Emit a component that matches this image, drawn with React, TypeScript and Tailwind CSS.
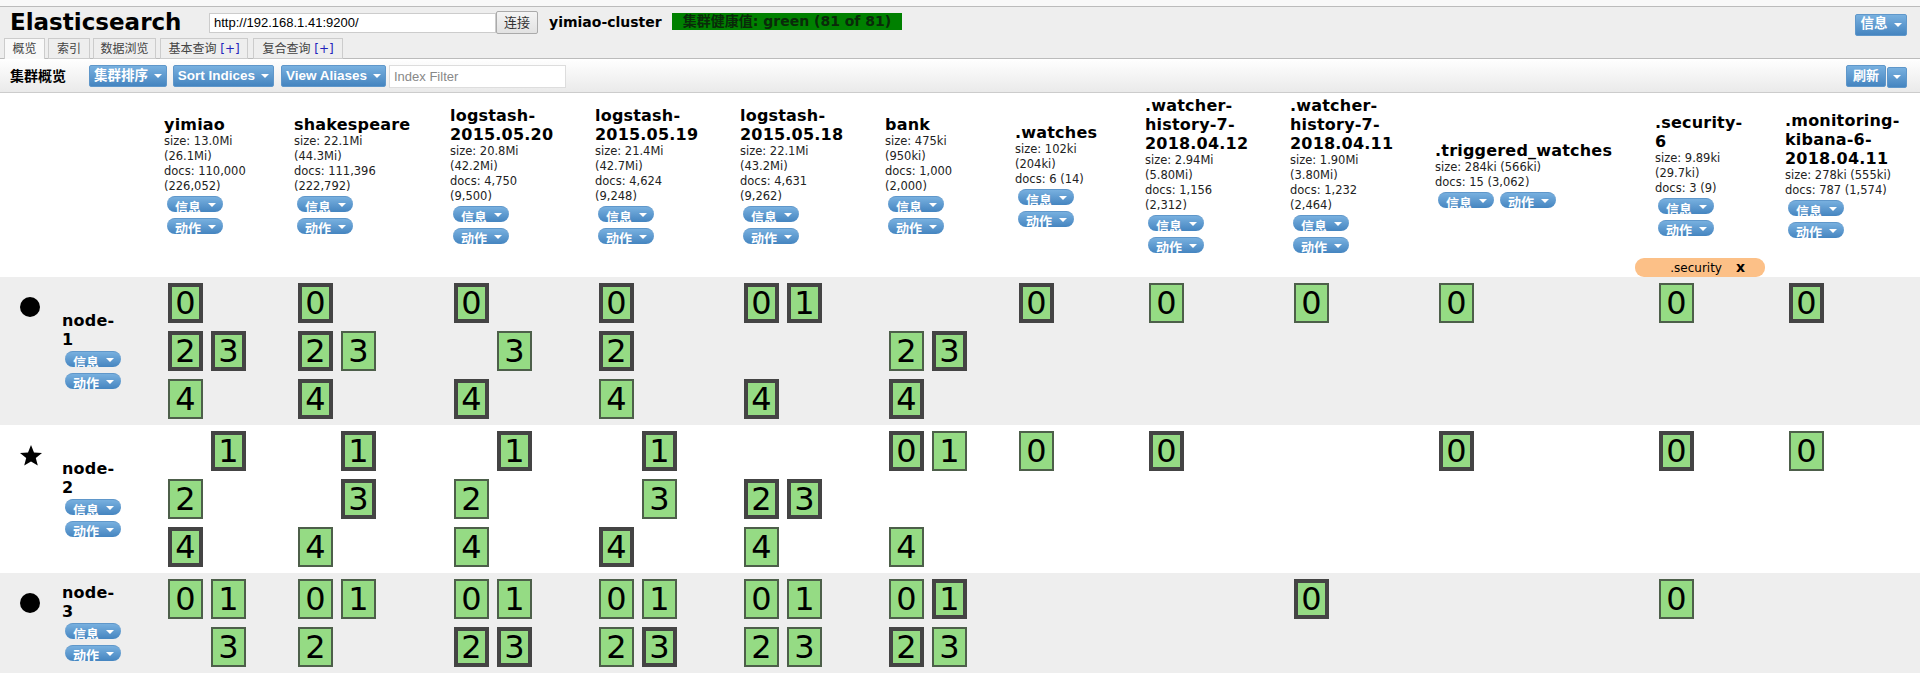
const font = "font-['DejaVu_Sans','Noto_Sans_CJK_SC',sans-serif]";
const arial = "font-['Liberation_Sans','Noto_Sans_CJK_SC',sans-serif]";

type Index = { name: string[]; info: string[]; inline?: boolean };

const indices: Index[] = [
  { name: ["yimiao"], info: ["size: 13.0Mi", "(26.1Mi)", "docs: 110,000", "(226,052)"] },
  { name: ["shakespeare"], info: ["size: 22.1Mi", "(44.3Mi)", "docs: 111,396", "(222,792)"] },
  { name: ["logstash-", "2015.05.20"], info: ["size: 20.8Mi", "(42.2Mi)", "docs: 4,750", "(9,500)"] },
  { name: ["logstash-", "2015.05.19"], info: ["size: 21.4Mi", "(42.7Mi)", "docs: 4,624", "(9,248)"] },
  { name: ["logstash-", "2015.05.18"], info: ["size: 22.1Mi", "(43.2Mi)", "docs: 4,631", "(9,262)"] },
  { name: ["bank"], info: ["size: 475ki", "(950ki)", "docs: 1,000", "(2,000)"] },
  { name: [".watches"], info: ["size: 102ki", "(204ki)", "docs: 6 (14)"] },
  { name: [".watcher-", "history-7-", "2018.04.12"], info: ["size: 2.94Mi", "(5.80Mi)", "docs: 1,156", "(2,312)"] },
  { name: [".watcher-", "history-7-", "2018.04.11"], info: ["size: 1.90Mi", "(3.80Mi)", "docs: 1,232", "(2,464)"] },
  { name: [".triggered_watches"], info: ["size: 284ki (566ki)", "docs: 15 (3,062)"], inline: true },
  { name: [".security-", "6"], info: ["size: 9.89ki", "(29.7ki)", "docs: 3 (9)"] },
  { name: [".monitoring-", "kibana-6-", "2018.04.11"], info: ["size: 278ki (555ki)", "docs: 787 (1,574)"] },
];

// shard number, P = primary (thick border), r = replica
const nodes: { name: string; star?: boolean; shards: string[] }[] = [
  {
    name: "1",
    shards: ["0P 2P 3P 4r", "0P 2P 3r 4P", "0P 3r 4P", "0P 2P 4r", "0P 1P 4P", "2r 3P 4P", "0P", "0r", "0r", "0r", "0r", "0P"],
  },
  {
    name: "2",
    star: true,
    shards: ["1P 2r 4P", "1P 3P 4r", "1P 2r 4r", "1P 3r 4P", "2P 3P 4r", "0P 1r 4r", "0r", "0P", "", "0P", "0P", "0r"],
  },
  {
    name: "3",
    shards: ["0r 1r 3r", "0r 1r 2r", "0r 1r 2P 3P", "0r 1r 2r 3P", "0r 1r 2r 3r", "0r 1P 2P 3r", "", "", "0P", "", "0r", ""],
  },
];

function Arrow() {
  return <span className="inline-block w-0 h-0 border-x-[4px] border-t-[4px] border-x-transparent border-t-white" />;
}

function Pill({ label, low }: { label: string; low?: boolean }) {
  return (
    <div className={`flex items-start w-[56px] h-4 overflow-hidden rounded-full bg-gradient-to-b from-[#78b0df] to-[#4585c0] border-t border-[#5f97ca] pl-2 text-white text-[13px] font-bold ${low ? "leading-[19px]" : "leading-[21px]"}`}>
      <span>{label}</span>
      <span className="ml-[7px] mt-[6px] flex"><Arrow /></span>
    </div>
  );
}

function Btn({ label, className }: { label: string; className: string }) {
  return (
    <div className={`flex items-center justify-center gap-[6px] rounded-[2px] bg-gradient-to-b from-[#78b0df] to-[#4585c0] border border-[#5f97ca] text-white font-bold text-[13.5px] ${arial} ${className}`}>
      <span>{label}</span>
      <Arrow />
    </div>
  );
}

function Shard({ id, primary }: { id: string; primary: boolean }) {
  return (
    <div className={`w-[35px] h-10 flex items-center justify-center bg-[#95db84] text-[32px] leading-none text-black ${primary ? "border-[4px] border-[#444]" : "border-2 border-[#4d5f4a]"}`}>
      {id}
    </div>
  );
}

function ShardCell({ spec }: { spec: string }) {
  const list = spec ? spec.split(" ") : [];
  const last = list.length ? parseInt(list[list.length - 1][0]) : -1;
  const slots = [];
  for (let i = 0; i <= last; i++) {
    const s = list.find(x => x[0] === String(i));
    slots.push(s ? <Shard key={i} id={s[0]} primary={s[1] === "P"} /> : <div key={i} className="w-[35px] h-10" />);
  }
  return <div className="grid grid-cols-[35px_35px] gap-2 pl-1">{slots}</div>;
}

function Tab({ children, active, className }: { children: React.ReactNode; active?: boolean; className: string }) {
  return (
    <div className={`h-[21px] flex items-center justify-center border border-[#ccc] ${active ? "border-b-0 bg-[#f9f9f9]" : "bg-[#eee]"} text-[12px] text-[#444] ${className}`}>
      {children}
    </div>
  );
}

export default function App() {
  return (
    <div className={`w-[1920px] h-[682px] overflow-hidden bg-white text-black ${font}`}>
      <div className="h-[6px] bg-[#f8f8f8]" />
      <div className="h-[53px] bg-[#eee] border-y border-[#bbb]">
        <div className="flex items-center h-[30px] pl-[10px] pt-[1px]">
          <div className="w-[199px] text-[23px] font-bold leading-none">Elasticsearch</div>
          <input
            readOnly
            value="http://192.168.1.41:9200/"
            className={`w-[287px] h-[20px] bg-white border border-[#ccc] px-1 text-[13px] text-black outline-none ${arial}`}
          />
          <div className="w-[42px] h-[23px] flex items-center justify-center bg-gradient-to-b from-[#f4f4f4] to-[#e2e2e2] border border-[#aaa] rounded-[2px] text-[13px] text-[#333]">连接</div>
          <div className="ml-[11px] w-[123px] text-[14px] font-bold whitespace-nowrap">yimiao-cluster</div>
          <div className="w-[230px] h-[17px] mb-[2px] flex items-center justify-center bg-[#008000] text-[14px] font-bold text-[#0a2a0a] whitespace-nowrap">集群健康值: green (81 of 81)</div>
          <div className="ml-auto mr-[13px]">
            <Btn label="信息" className="w-[52px] h-[22px] mt-[4px]" />
          </div>
        </div>
        <div className="flex gap-[3px] pl-1 pt-[1px]">
          <Tab active className="w-[41px]">概览</Tab>
          <Tab className="w-[42px]">索引</Tab>
          <Tab className="w-[63px]">数据浏览</Tab>
          <Tab className="ml-[1px] w-[88px]">基本查询&nbsp;<span className="text-[#2222bb]">[+]</span></Tab>
          <Tab className="ml-[2px] w-[90px]">复合查询&nbsp;<span className="text-[#2222bb]">[+]</span></Tab>
        </div>
      </div>
      <div className="flex items-center h-[34px] pt-[1px] pl-[10px] pr-[13px] bg-gradient-to-b from-white to-[#eaeaea] border-b border-[#ccc]">
        <div className="w-[79px] text-[14px] font-bold">集群概览</div>
        <Btn label="集群排序" className="w-[78px] h-[22px]" />
        <Btn label="Sort Indices" className="ml-[6px] w-[101px] h-[22px]" />
        <Btn label="View Aliases" className="ml-[7px] w-[105px] h-[22px]" />
        <input
          readOnly
          placeholder="Index Filter"
          className={`ml-[3px] w-[177px] h-[23px] bg-white border border-[#ddd] px-[4px] text-[13px] outline-none placeholder:text-[#888] ${arial}`}
        />
        <div className="ml-auto flex items-center gap-[1px]">
          <div className="w-[40px] h-[22px] flex items-center justify-center rounded-[2px] bg-gradient-to-b from-[#78b0df] to-[#4585c0] border border-[#5f97ca] text-white font-bold text-[13px]">刷新</div>
          <div className="w-[20px] h-[21px] mt-[2px] flex items-center justify-center rounded-[2px] bg-gradient-to-b from-[#78b0df] to-[#4585c0] border border-[#5f97ca]"><Arrow /></div>
        </div>
      </div>
      <table className="table-fixed border-collapse w-[1920px]">
        <colgroup>
          <col className="w-[58px]" />
          <col className="w-[106px]" />
          <col className="w-[130px]" />
          <col className="w-[156px]" />
          <col className="w-[145px]" />
          <col className="w-[145px]" />
          <col className="w-[145px]" />
          <col className="w-[130px]" />
          <col className="w-[130px]" />
          <col className="w-[145px]" />
          <col className="w-[145px]" />
          <col className="w-[220px]" />
          <col className="w-[130px]" />
          <col className="w-[135px]" />
        </colgroup>
        <thead>
          <tr className="h-[163px]">
            <th colSpan={2} />
            {indices.map((ix, i) => (
              <th key={i} className="text-left font-normal align-middle p-0 whitespace-nowrap">
                <div className="text-[16px] font-bold leading-[19px] tracking-[0.2px]">
                  {ix.name.map(n => <div key={n}>{n}</div>)}
                </div>
                <div className="text-[11.5px] leading-[15px] text-[#222]">
                  {ix.info.map(n => <div key={n}>{n}</div>)}
                </div>
                <div className={`flex ml-[3px] mt-[2px] gap-[6px] ${ix.inline ? "flex-row" : "flex-col"}`}>
                  <Pill label="信息" />
                  <Pill label="动作" low />
                </div>
              </th>
            ))}
          </tr>
          <tr className="h-[21px]">
            <th colSpan={12} />
            <th className="p-0 align-bottom">
              <div className="-ml-5 w-[130px] h-[19px] flex items-center justify-end gap-[14px] pr-[20px] rounded-[9px] bg-[#fcc087] font-normal text-[12px]">
                <span>.security</span>
                <span className="text-[14px] font-bold">x</span>
              </div>
            </th>
            <th />
          </tr>
        </thead>
        <tbody>
          {nodes.map((node, n) => (
            <tr key={node.name} className={n % 2 === 0 ? "bg-[#eee]" : "bg-white"}>
              <td className="align-top pt-[20px] pl-[20px]">
                <svg width="22" height="21" viewBox="0 0 22 21" className="block">
                  {node.star ? (
                    <path d="M11 0L14 7.4L22 7.9L15.8 13L17.8 20.5L11 16.4L4.2 20.5L6.2 13L0 7.9L8 7.4Z" fill="#000" />
                  ) : (
                    <circle cx="10" cy="10" r="10" fill="#000" />
                  )}
                </svg>
              </td>
              <td className="align-middle pl-1 pb-[2px]">
                <div className="text-[16px] font-bold leading-[19px] tracking-[0.2px]">
                  <div>node-</div>
                  <div>{node.name}</div>
                </div>
                <div className="flex flex-col gap-[6px] ml-[3px] mt-[2px]">
                  <Pill label="信息" />
                  <Pill label="动作" low />
                </div>
              </td>
              {node.shards.map((spec, i) => (
                <td key={i} className="align-top p-0 pt-[6px] pb-[6px]">
                  <ShardCell spec={spec} />
                </td>
              ))}
            </tr>
          ))}
        </tbody>
      </table>
    </div>
  );
}
